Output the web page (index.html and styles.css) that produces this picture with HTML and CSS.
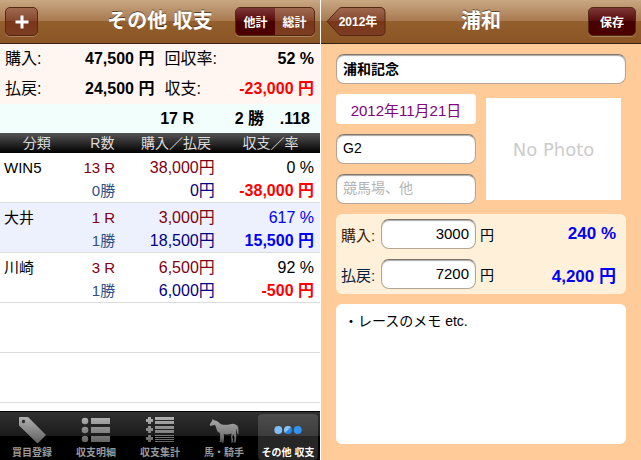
FILE: index.html
```
<!DOCTYPE html>
<html lang="ja">
<head>
    <meta charset="UTF-8">
    <meta name="viewport" content="width=device-width, initial-scale=1.0">
    <title>その他 収支</title>
    <link rel="stylesheet" href="styles.css">
</head>
<body>
    <!-- 左：収支一覧 -->
    <section class="screen list-screen">
        <header class="navbar">
            <button class="nav-button add-button" type="button" aria-label="追加">
                <svg width="14" height="14" viewBox="0 0 14 14"><path d="M5.5 0.5h3v5h5v3h-5v5h-3v-5h-5v-3h5z" fill="#fff"/></svg>
            </button>
            <h1 class="nav-title">その他 収支</h1>
            <div class="segmented">
                <button class="segment active" type="button">他計</button>
                <button class="segment" type="button">総計</button>
            </div>
        </header>

        <dl class="summary">
            <dt>購入:</dt><dd>47,500 円</dd>
            <dt>回収率:</dt><dd>52 %</dd>
            <dt>払戻:</dt><dd>24,500 円</dd>
            <dt>収支:</dt><dd class="loss">-23,000 円</dd>
        </dl>
        <div class="record">
            <span class="races">17 R</span>
            <span class="wins">2 勝</span>
            <span class="rate">.118</span>
        </div>

        <table class="results">
            <thead>
                <tr><th class="col-name">分類</th><th class="col-race">R数</th><th class="col-money">購入／払戻</th><th class="col-total">収支／率</th></tr>
            </thead>
            <tbody>
                <tr>
                    <td class="name">WIN5</td>
                    <td class="num count"><span class="buy">13 R</span><span class="win">0勝</span></td>
                    <td class="num yen"><span class="buy">38,000円</span><span class="pay">0円</span></td>
                    <td class="num total"><span>0 %</span><strong class="loss">-38,000 円</strong></td>
                </tr>
                <tr class="alt">
                    <td class="name">大井</td>
                    <td class="num count"><span class="buy">1 R</span><span class="win">1勝</span></td>
                    <td class="num yen"><span class="buy">3,000円</span><span class="pay">18,500円</span></td>
                    <td class="num total"><span class="gain">617 %</span><strong class="gain">15,500 円</strong></td>
                </tr>
                <tr>
                    <td class="name">川崎</td>
                    <td class="num count"><span class="buy">3 R</span><span class="win">1勝</span></td>
                    <td class="num yen"><span class="buy">6,500円</span><span class="pay">6,000円</span></td>
                    <td class="num total"><span>92 %</span><strong class="loss">-500 円</strong></td>
                </tr>
                <tr><td colspan="4"></td></tr>
                <tr><td colspan="4"></td></tr>
            </tbody>
        </table>

        <nav class="tabbar">
            <a class="tab" href="#entry">
                <svg class="tab-icon" viewBox="0 0 32 30">
                    <defs><linearGradient id="metal" gradientUnits="userSpaceOnUse" x1="0" y1="2" x2="0" y2="29"><stop offset="0" stop-color="#b4b4b4"/><stop offset="1" stop-color="#616161"/></linearGradient></defs>
                    <path fill="url(#metal)" fill-rule="evenodd" d="M3 4q0-1 1-1h8l18 18-8.500 8.500L3 11.500zM7.500 5.800a1.700 1.700 0 1 0 0.010 0z"/>
                </svg>
                買目登録
            </a>
            <a class="tab" href="#detail">
                <svg class="tab-icon" viewBox="0 0 32 30" fill="url(#metal)">
                    <circle cx="5" cy="7" r="3.300"/><circle cx="5" cy="16" r="3.300"/><circle cx="5" cy="25" r="3.300"/>
                    <path d="M11 4h19v6H11zM11 13h19v6H11zM11 22h19v6H11z"/>
                </svg>
                収支明細
            </a>
            <a class="tab" href="#stats">
                <svg class="tab-icon" viewBox="0 0 32 30" fill="url(#metal)">
                    <path d="M4 3h3v2h2v3H7v2H4V8H2V5h2zM4 12h3v2h2v3H7v2H4v-2H2v-3h2zM4 21h3v2h2v3H7v2H4v-2H2v-3h2z"/>
                    <path d="M11 3h19v3H11zM11 7h19v3H11zM11 12h19v3H11zM11 16h19v3H11zM11 21h19v1H11zM11 23h19v1H11zM11 25h19v1H11zM11 27h19v1H11z"/>
                </svg>
                収支集計
            </a>
            <a class="tab" href="#horse">
                <svg class="tab-icon" viewBox="0 0 32 30" fill="url(#metal)">
                    <path d="M4.500 5L6 6.200 9 7l4 3.200q5 1.200 9 0 3-1 5.500 0.200Q30 11 30.300 14l0.200 6.500-1.300-1-0.500-5-0.700 4 0.300 4-0.700 6h-2.200l0.800-1.300 0.200-4.200-1.300-3-0.800 3.500 0.800 1.500-0.300 3.500h-2l0.800-1.300-0.500-4 0.400-3.700q-4 1.500-7.700 0.600l0.200 4-0.500 4.400h-2l0.700-1.400-0.200-3-0.500 4h-2.200l0.900-1.500-0.200-7.600Q8.500 18 8 13l-1-2-3 0.500-1.600 0.500-0.800-1.500L4 7z"/>
                </svg>
                馬・騎手
            </a>
            <a class="tab current" href="#other">
                <svg class="tab-icon" viewBox="0 0 32 30">
                    <defs><linearGradient id="blue" x1="0" y1="0" x2="1" y2="1"><stop offset="0.450" stop-color="#8ac4f8"/><stop offset="0.550" stop-color="#2487ee"/></linearGradient></defs>
                    <circle cx="6.300" cy="16" r="4" fill="#82bdf5"/><circle cx="16" cy="16" r="4" fill="url(#blue)"/><circle cx="25.700" cy="16" r="4" fill="#3093f2"/>
                </svg>
                その他 収支
            </a>
        </nav>
    </section>

    <!-- 右：レース編集 -->
    <form class="screen edit-screen">
        <header class="navbar">
            <button class="back-button" type="button">
                <svg class="back-shape" viewBox="0 0 60 30" preserveAspectRatio="none">
                    <defs><linearGradient id="brown" x1="0" y1="0" x2="0" y2="1"><stop offset="0" stop-color="#a06a50"/><stop offset="0.500" stop-color="#83462d"/><stop offset="0.500" stop-color="#793719"/><stop offset="1" stop-color="#7d3d22"/></linearGradient></defs>
                    <path d="M13 1.500Q14 0.500 16 0.500H54Q59 0.500 59 5.500V23.500Q59 28.500 54 28.500H16Q14 28.500 13 27.500L1 14.500Z" fill="url(#brown)" stroke="#552811"/>
                </svg>
                <span class="back-label">2012年</span>
            </button>
            <h1 class="nav-title">浦和</h1>
            <button class="nav-button save-button" type="submit">保存</button>
        </header>

        <div class="form-body">
            <input class="field race-name" type="text" value="浦和記念" aria-label="レース名">
            <div class="race-info">
                <div class="info-fields">
                    <button class="date-button" type="button">2012年11月21日</button>
                    <input class="field" type="text" value="G2" aria-label="グレード">
                    <input class="field" type="text" placeholder="競馬場、他" aria-label="競馬場、他">
                </div>
                <button class="photo" type="button">No Photo</button>
            </div>
            <div class="money">
                <label class="buy-label" for="buy">購入:</label>
                <input class="field amount" id="buy" type="text" value="3000">
                <span class="unit">円</span>
                <output class="gain" for="buy pay">240 %</output>
                <label class="pay-label" for="pay">払戻:</label>
                <input class="field amount" id="pay" type="text" value="7200">
                <span class="unit">円</span>
                <output class="gain" for="buy pay">4,200 円</output>
            </div>
            <textarea class="memo" aria-label="メモ">・レースのメモ etc.</textarea>
        </div>
    </form>
</body>
</html>
```
FILE: styles.css
```
:root {
    --loss: #ff0000;
    --gain: #0000f5;
    --buy: #800010;
    --pay: #000080;
    --line: #dcdcdc;
}

* {
    box-sizing: border-box;
}

body {
    margin: 0;
    min-height: 100vh;
    display: grid;
    grid-template-columns: 1fr 1fr;
    gap: 1px;
    background: #fff;
    color: #000;
    font-family: "Liberation Sans", "Noto Sans CJK JP", sans-serif;
    font-size: 16px;
}

button,
input,
textarea {
    font: inherit;
}

.screen {
    display: flex;
    flex-direction: column;
    min-width: 0;
}

/* ナビゲーションバー */
.navbar {
    display: grid;
    grid-template-columns: 1fr auto 1fr;
    align-items: center;
    height: 44px;
    padding: 0 5px;
    background: linear-gradient(#c8a883, #a97a50 48%, #935f2c 50%, #8b5425);
    border-bottom: 1px solid #3a2010;
}

.nav-title {
    margin: 0;
    padding-bottom: 2px;
    color: #fff;
    font-size: 20px;
    line-height: 28px;
    text-shadow: 0 -1px 0 rgba(0, 0, 0, 0.5);
}

.nav-button,
.segmented {
    height: 29px;
    border: 1px solid #552811;
    border-radius: 5px;
    background: linear-gradient(#a06a50, #83462d 50%, #793719 50%, #7d3d22);
    box-shadow: 0 1px 0 rgba(255, 255, 255, 0.25);
    color: #fff;
    font-size: 12px;
    font-weight: bold;
}

.add-button {
    display: flex;
    align-items: center;
    justify-content: center;
    width: 33px;
    padding: 0;
}

.segmented {
    display: flex;
    justify-self: end;
    width: 80px;
    overflow: hidden;
}

.segment {
    flex: 1;
    padding: 0;
    border: 0;
    background: none;
    color: #fff;
}

.segment.active,
.save-button {
    background: linear-gradient(#7d3838, #560808 50%, #470000 50%, #4d0000);
}

.save-button {
    justify-self: end;
    width: 48px;
    padding: 0;
}

.back-button {
    position: relative;
    width: 60px;
    height: 30px;
    padding: 0 0 2px 4px;
    border: 0;
    background: none;
    color: #fff;
    font-size: 12px;
    font-weight: bold;
}

.back-shape {
    position: absolute;
    inset: 0;
    width: 100%;
    height: 100%;
}

.back-label {
    position: relative;
}

/* 合計 */
.summary {
    display: grid;
    grid-template-columns: 50px 11fr 60px 9fr;
    margin: 0;
    padding: 0 6px 0 5px;
    background: #fff6f1;
    line-height: 30px;
}

.summary dd {
    margin: 0;
    font-weight: bold;
    text-align: right;
    white-space: nowrap;
}

.summary dd:nth-of-type(odd) {
    padding-right: 10px;
}

.record {
    display: grid;
    grid-template-columns: 1fr 70px 46px;
    padding-right: 10px;
    background: #f1fefc;
    font-weight: bold;
    line-height: 29px;
    text-align: right;
}

.loss {
    color: var(--loss);
}

.gain {
    color: var(--gain);
}

.buy {
    color: var(--buy);
}

.pay {
    color: var(--pay);
}

.win {
    color: #2f4f86;
}

/* 明細テーブル */
.results {
    width: 100%;
    table-layout: fixed;
    border-collapse: separate;
    border-spacing: 0;
}

.results th {
    height: 20px;
    padding: 0;
    color: #ddd;
    font-size: 14px;
    font-weight: normal;
    line-height: 20px;
}

.results thead {
    background: linear-gradient(#555, #111 80%, #000);
}

.col-name {
    width: 23%;
}

.col-race {
    width: 18%;
}

.col-money {
    width: 28%;
}

.results td {
    height: 50px;
    padding: 3px 0 0;
    border-bottom: 1px solid var(--line);
    line-height: 23px;
    vertical-align: top;
}

.results .name {
    padding-left: 4px;
    font-size: 15px;
}

.results .num {
    text-align: right;
    white-space: nowrap;
}

.results .count {
    padding-right: 16px;
    font-size: 15px;
}

.results .yen,
.results .total {
    padding-right: 6px;
}

.num > * {
    display: block;
}

.alt {
    background: #ecf1fd;
}

/* タブバー */
.tabbar {
    display: grid;
    grid-template-columns: repeat(5, 1fr);
    height: 49px;
    margin-top: auto;
    padding-top: 2px;
    border-top: 1px solid #000;
    background: linear-gradient(#303030, #1b1b1b 50%, #000 50%);
}

.tab {
    display: flex;
    flex-direction: column;
    align-items: center;
    gap: 2px;
    margin: 0 2px 2px;
    border-radius: 4px;
    color: #999;
    font-size: 10px;
    font-weight: bold;
    line-height: 14px;
    text-decoration: none;
    white-space: nowrap;
}

.tab-icon {
    flex: none;
    width: 32px;
    height: 30px;
}

.tab.current {
    background: rgba(255, 255, 255, 0.15);
    color: #fff;
}

/* 編集画面 */
.edit-screen {
    background: #ffcb99;
}

.form-body {
    display: flex;
    flex: 1;
    flex-direction: column;
    gap: 10px;
    padding: 10px 15px 16px;
}

.field {
    width: 100%;
    height: 30px;
    padding: 0 6px 2px;
    border: 1px solid #b5a595;
    border-top-color: #80736a;
    border-radius: 8px;
    background: #fff;
    box-shadow: inset 0 1px 1px #aaa;
    font-size: 14px;
}

.field::placeholder {
    color: #b3b3b3;
}

.race-name {
    font-weight: bold;
}

.race-info {
    display: grid;
    grid-template-columns: 140px 1fr;
    gap: 10px;
    padding-right: 5px;
}

.info-fields {
    display: grid;
    gap: 10px;
}

.date-button {
    height: 30px;
    padding: 0;
    border: 0;
    border-radius: 4px;
    background: #fff;
    color: #800080;
    font-size: 15px;
}

.photo {
    height: 102px;
    margin-top: 4px;
    padding: 0;
    border: 0;
    background: #fff;
    color: #ccc;
    font-family: "DejaVu Sans", sans-serif;
    font-size: 18px;
}

.money {
    display: grid;
    grid-template-columns: 40px 95px 20px 1fr;
    align-items: center;
    row-gap: 10px;
    padding: 5px 10px 5px 5px;
    border-radius: 6px;
    background: #fff0d9;
}

.money .field {
    font-size: 15px;
    text-align: right;
}

.money label {
    font-size: 15px;
}

.buy-label {
    color: #402000;
}

.pay-label {
    color: #002040;
}

.unit {
    padding-left: 4px;
    font-size: 14px;
}

.money output {
    font-size: 17px;
    font-weight: bold;
    text-align: right;
}

.memo {
    flex: 1;
    padding: 6px 8px;
    border: 0;
    border-radius: 6px;
    background: #fff;
    font-size: 14px;
    resize: none;
}
```
